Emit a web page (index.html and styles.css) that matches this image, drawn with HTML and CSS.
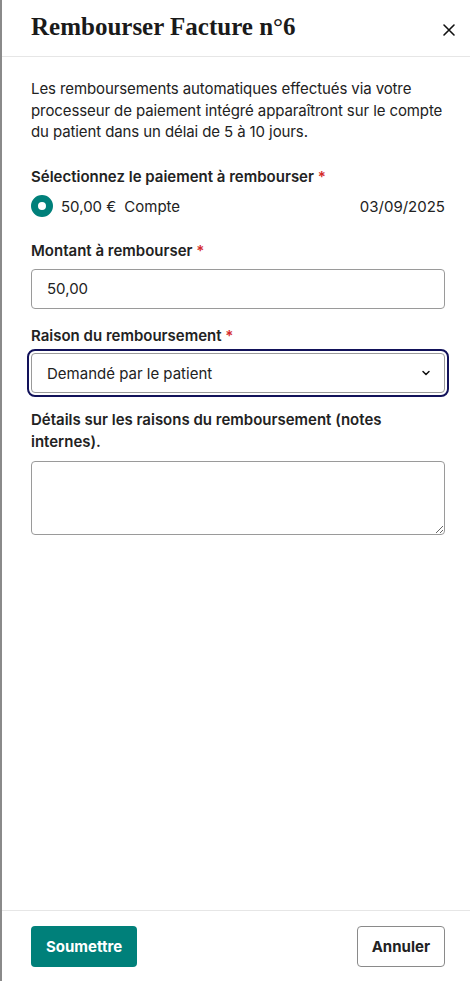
FILE: index.html
```html
<!DOCTYPE html>
<html lang="fr">
<head>
    <meta charset="UTF-8">
    <meta name="viewport" content="width=device-width, initial-scale=1.0">
    <title>Rembourser Facture n°6</title>
    <link rel="stylesheet" href="styles.css">
</head>
<body>
    <div class="panel">
        <div class="panel-header">
            <h1>Rembourser Facture n°6</h1>
            <button class="close-btn" aria-label="Fermer">
                <svg width="14" height="14" viewBox="0 0 14 14">
                    <path d="M2 2 L12 12 M12 2 L2 12" stroke="#111" stroke-width="1.6" stroke-linecap="round"/>
                </svg>
            </button>
        </div>

        <div class="panel-body">
            <p class="intro">Les remboursements automatiques effectués via votre processeur de paiement intégré apparaîtront sur le compte du patient dans un délai de 5 à 10 jours.</p>

            <div class="field field-payment">
                <label class="field-label">Sélectionnez le paiement à rembourser <span class="req">*</span></label>
                <div class="payment-row">
                    <span class="radio"></span>
                    <span class="amount">50,00 €</span>
                    <span class="method">Compte</span>
                    <span class="date">03/09/2025</span>
                </div>
            </div>

            <div class="field">
                <label class="field-label" for="montant">Montant à rembourser <span class="req">*</span></label>
                <input class="text-input" type="text" id="montant" value="50,00">
            </div>

            <div class="field">
                <label class="field-label">Raison du remboursement <span class="req">*</span></label>
                <div class="select focused">
                    <span>Demandé par le patient</span>
                    <svg width="12" height="8" viewBox="0 0 12 8">
                        <path d="M3 2.5 L6 5.5 L9 2.5" fill="none" stroke="#111" stroke-width="1.5" stroke-linecap="round" stroke-linejoin="round"/>
                    </svg>
                </div>
            </div>

            <div class="field">
                <label class="field-label label-notes" for="details">Détails sur les raisons du remboursement (notes internes).</label>
                <textarea class="text-area" id="details"></textarea>
            </div>
        </div>

        <div class="panel-footer">
            <button class="btn btn-primary">Soumettre</button>
            <button class="btn btn-secondary">Annuler</button>
        </div>
    </div>
</body>
</html>
```

FILE: styles.css
```css
html, body {
    margin: 0;
    height: 100%;
}
body {
    font-family: Inter, "Noto Sans", sans-serif;
    color: #222;
    background: #fff;
}
.panel {
    height: 100%;
    box-sizing: border-box;
    border-left: 2px solid #8a8a8a;
    display: flex;
    flex-direction: column;
}
.panel-header {
    display: flex;
    align-items: center;
    justify-content: space-between;
    height: 57px;
    box-sizing: border-box;
    padding: 0 10px 0 29px;
    border-bottom: 1px solid #e6e6e6;
}
.panel-header h1 {
    margin: 0 0 2px 0;
    font-family: "Liberation Serif", serif;
    font-weight: bold;
    font-size: 25px;
    color: #1a1a1a;
}
.close-btn {
    background: none;
    border: none;
    padding: 4px;
    margin-top: 6px;
    cursor: pointer;
}
.panel-body {
    flex: 1;
    padding: 21px 25px 0 29px;
}
.intro {
    margin: 0 0 23px 0;
    font-size: 15px;
    line-height: 21.5px;
    letter-spacing: -0.1px;
}
.field {
    margin-bottom: 16px;
}
.field-payment {
    margin-bottom: 22px;
}
.field-label {
    display: block;
    font-size: 15px;
    font-weight: 600;
    line-height: 21.5px;
    margin-bottom: 7px;
}
.label-notes {
    margin-bottom: 9px;
}
.req {
    color: #d42a2a;
}
.payment-row {
    display: flex;
    align-items: center;
    font-size: 15px;
    height: 24px;
}
.radio {
    width: 22px;
    height: 22px;
    box-sizing: border-box;
    border-radius: 50%;
    border: 7px solid #00807a;
    background: #fff;
    margin-right: 8px;
}
.amount {
    margin-right: 8px;
}
.date {
    margin-left: auto;
}
.text-input, .select, .text-area {
    display: block;
    width: 100%;
    box-sizing: border-box;
    border: 1px solid #9a9a9a;
    border-radius: 4px;
    font-family: inherit;
    font-size: 15px;
    color: #222;
    background: #fff;
}
.text-input {
    height: 40px;
    padding: 0 15px;
}
.select {
    height: 40px;
    padding: 0 12px 0 15px;
    display: flex;
    align-items: center;
    justify-content: space-between;
}
.select.focused {
    outline: 2px solid #12125a;
    outline-offset: 2px;
}
.text-area {
    height: 74px;
    resize: vertical;
    padding: 8px 15px;
}
.panel-footer {
    display: flex;
    justify-content: space-between;
    padding: 15px 25px 14px 29px;
    border-top: 1px solid #e6e6e6;
}
.btn {
    height: 41px;
    border-radius: 4px;
    font-family: inherit;
    font-size: 15px;
    font-weight: 700;
    cursor: pointer;
}
.btn-primary {
    background: #00807a;
    color: #fff;
    border: none;
    padding: 0 15px;
}
.btn-secondary {
    background: #fff;
    color: #222;
    border: 1px solid #8a8a8a;
    padding: 0 14px;
}
```
